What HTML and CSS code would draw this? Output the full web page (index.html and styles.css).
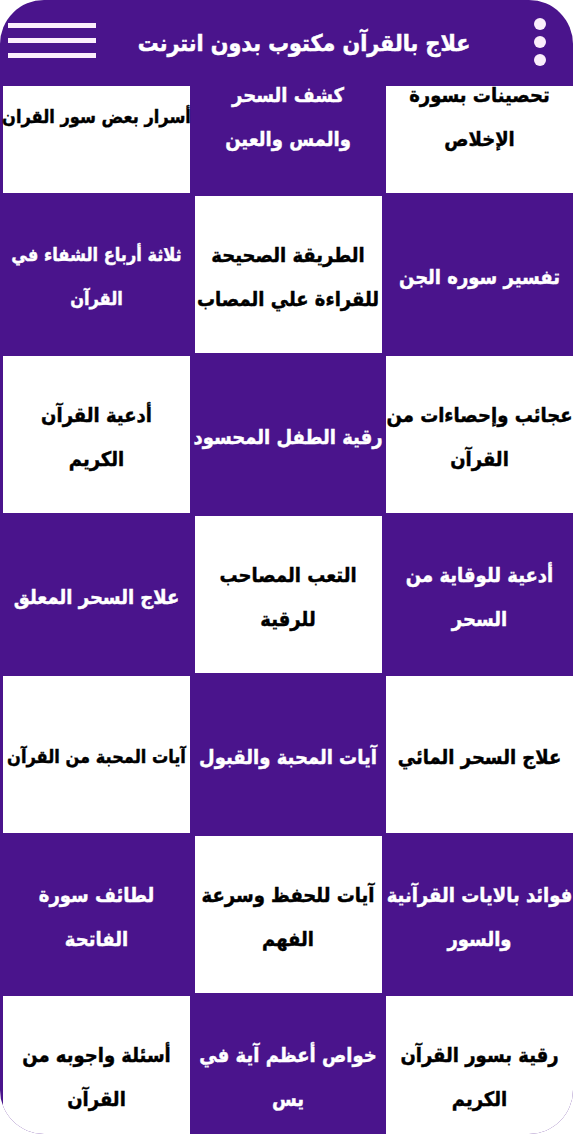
FILE: index.html
```html
<!DOCTYPE html>
<html lang="ar" dir="rtl">
<head>
<meta charset="utf-8">
<title>علاج بالقرآن مكتوب بدون انترنت</title>
<link rel="stylesheet" href="styles.css">
</head>
<body>
<div class="frame">
  <header class="appbar">
    <div class="kebab" aria-label="more"><span></span><span></span><span></span></div>
    <h1 class="title">علاج بالقرآن مكتوب بدون انترنت</h1>
    <div class="burger" aria-label="menu"><span></span><span></span><span></span></div>
  </header>
  <main class="list">
    <div class="grid">
      <a class="cell light">تحصينات بسورة<br>الإخلاص</a>
      <a class="cell dark">كشف السحر<br>والمس والعين</a>
      <a class="cell light fit">أسرار بعض سور القران</a>

      <a class="cell dark">تفسير سوره الجن</a>
      <a class="cell light">الطريقة الصحيحة<br>للقراءة علي المصاب</a>
      <a class="cell dark fit">ثلاثة أرباع الشفاء في<br>القرآن</a>

      <a class="cell light">عجائب وإحصاءات من<br>القرآن</a>
      <a class="cell dark">رقية الطفل المحسود</a>
      <a class="cell light">أدعية القرآن<br>الكريم</a>

      <a class="cell dark">أدعية للوقاية من<br>السحر</a>
      <a class="cell light">التعب المصاحب<br>للرقية</a>
      <a class="cell dark">علاج السحر المعلق</a>

      <a class="cell light">علاج السحر المائي</a>
      <a class="cell dark">آيات المحبة والقبول</a>
      <a class="cell light fit">آيات المحبة من القرآن</a>

      <a class="cell dark">فوائد بالايات القرآنية<br>والسور</a>
      <a class="cell light">آيات للحفظ وسرعة<br>الفهم</a>
      <a class="cell dark">لطائف سورة<br>الفاتحة</a>

      <a class="cell light">رقية بسور القرآن<br>الكريم</a>
      <a class="cell dark">خواص أعظم آية في<br>يس</a>
      <a class="cell light">أسئلة واجوبه من<br>القرآن</a>
    </div>
  </main>
</div>
</body>
</html>
```

FILE: styles.css
```css
html, body {
  margin: 0;
  padding: 0;
  background: #ffffff;
}

body {
  width: 573px;
  height: 1134px;
  overflow: hidden;
  font-family: "DejaVu Sans Condensed", "DejaVu Sans", sans-serif;
}

.frame {
  width: 573px;
  height: 1134px;
  border-radius: 44px;
  overflow: hidden;
  background: #4a148c;
  display: flex;
  flex-direction: column;
}

.appbar {
  height: 86px;
  flex: none;
  display: flex;
  align-items: center;
  padding: 0 27px 0 8px;
}

.kebab {
  display: flex;
  flex-direction: column;
  gap: 6px;
  margin-top: -2px;
}

.kebab span {
  width: 12px;
  height: 12px;
  border-radius: 50%;
  background: #fbeefc;
}

.title {
  flex: 1;
  margin: 0;
  padding-right: 22px;
  text-align: center;
  color: #ffffff;
  font-size: 23px;
  font-weight: bold;
  white-space: nowrap;
  -webkit-text-stroke: 0.5px currentColor;
}

.burger {
  display: flex;
  flex-direction: column;
  gap: 10px;
  margin-top: -6px;
}

.burger span {
  display: block;
  width: 88px;
  height: 5px;
  background: #fbeefc;
}

.list {
  flex: 1;
  overflow: hidden;
}

.grid {
  display: grid;
  grid-template-columns: repeat(3, minmax(0, 1fr));
  grid-auto-rows: 157px;
  column-gap: 4.5px;
  row-gap: 3px;
  padding-left: 3px;
  margin-top: -50px;
}

.cell {
  display: flex;
  align-items: center;
  justify-content: center;
  padding-top: 5px;
  box-sizing: border-box;
  text-align: center;
  font-size: 20px;
  font-weight: bold;
  line-height: 44px;
  text-decoration: none;
  white-space: nowrap;
  -webkit-text-stroke: 0.4px currentColor;
}

.cell.fit {
  font-size: 18px;
}

.cell.light {
  background: #ffffff;
  color: #000000;
}

.cell.dark {
  background: #4a148c;
  color: #ffffff;
}
```
